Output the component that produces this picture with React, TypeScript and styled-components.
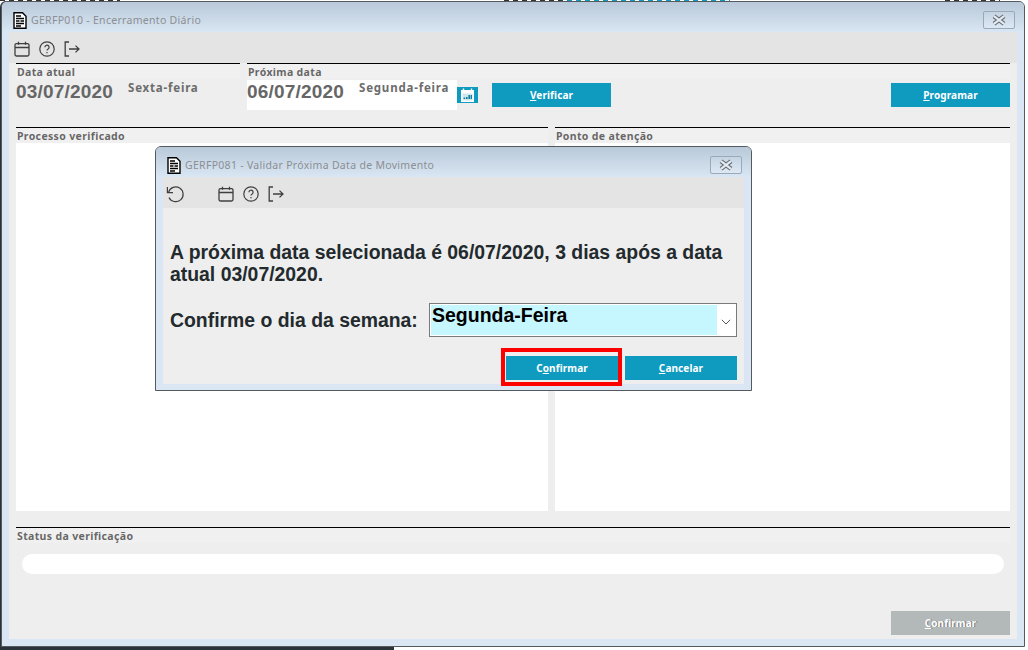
import React from "react";
import styled, { createGlobalStyle } from "styled-components";

const GlobalStyle = createGlobalStyle`
  html, body {
    margin: 0;
    padding: 0;
    background: #fff;
    overflow: hidden;
  }
  body {
    font-family: "Liberation Sans", Arial, sans-serif;
  }
`;

const Page = styled.div`
  position: relative;
  width: 1028px;
  height: 650px;
  display: flex;
  flex-direction: column;
  background: #fff;
`;

const TopStrip = styled.div`
  height: 1px;
  background:
    repeating-linear-gradient(90deg, transparent 0 5px, #fff 5px 9px),
    linear-gradient(
      90deg,
      #333 0 120px,
      #fff 120px 500px,
      #333 500px 560px,
      #0f9bbf 570px 730px,
      #fff 730px 945px,
      #333 945px 1000px,
      #fff 1000px
    );
`;

const BottomStrip = styled.div`
  width: 394px;
  height: 3px;
  background: #2a3338;
`;

const Frame = styled.div<{ $w: number; $h: number }>`
  box-sizing: border-box;
  width: ${({ $w }) => $w}px;
  height: ${({ $h }) => $h}px;
  display: flex;
  flex-direction: column;
  border: 1px solid #555a5e;
  border-radius: 6px 6px 0 0;
  background: #dae6f3;
`;

const MainFrame = styled(Frame)`
  margin-left: 1px;
  box-shadow: -1px 0 0 #2a3338;
`;

const TitleBar = styled.div`
  flex: none;
  box-sizing: border-box;
  height: 30px;
  display: flex;
  align-items: center;
  gap: 4px;
  padding: 6px 9px 0 11px;
  border-radius: 5px 5px 0 0;
  background: linear-gradient(180deg, #b9c9d9 0%, #d9e6f3 100%);
`;

const TitleText = styled.span`
  flex: 1;
  font-family: "Noto Sans", sans-serif;
  font-size: 10.5px;
  letter-spacing: 0.3px;
  color: #8b8f93;
`;

const CloseButton = styled.div`
  box-sizing: border-box;
  width: 32px;
  height: 18px;
  display: flex;
  align-items: center;
  justify-content: center;
  border: 1px solid #9aa9ba;
  border-radius: 2px;
  background: linear-gradient(180deg, #c6d4e2 0%, #dde8f4 100%);
`;

const Inner = styled.div<{ $bottom: number }>`
  flex: 1;
  margin: 0 7px ${({ $bottom }) => $bottom}px;
  display: flex;
  flex-direction: column;
  min-height: 0;
  background: #eeeeee;
`;

const Toolbar = styled.div`
  flex: none;
  box-sizing: border-box;
  height: 31px;
  display: flex;
  align-items: center;
  gap: 9px;
  padding: 3px 0 0 5px;
  background: #e4e4e4;
`;

const DialogToolbar = styled(Toolbar)`
  padding-left: 3px;
`;

const ToolSpacer = styled.div`
  width: 16px;
`;

const Content = styled.div`
  flex: 1;
  display: flex;
  flex-direction: column;
  padding: 0 7px 4px;
`;

const TopRow = styled.div`
  height: 64px;
  display: flex;
  gap: 7px;
`;

const PanelRow = styled.div`
  height: 384px;
  display: flex;
  gap: 7px;
`;

const Group = styled.div<{ $w?: number }>`
  display: flex;
  flex-direction: column;
  flex: ${({ $w }) => ($w ? `0 0 ${$w}px` : "1")};
  min-width: 0;
`;

const GroupLabel = styled.div`
  flex: none;
  box-sizing: border-box;
  height: 16px;
  padding: 1px 0 0 1px;
  border-top: 1px solid #000;
  background: #f0f0f0;
  font-family: "Noto Sans", sans-serif;
  font-weight: 700;
  font-size: 10.5px;
  line-height: 15px;
  letter-spacing: 0.35px;
  color: #666;
  text-shadow: 0 0 1px #fff;
`;

const DateRow = styled.div`
  display: flex;
  align-items: flex-start;
  margin-top: 1px;
`;

const DateBlock = styled.div<{ $white?: boolean }>`
  box-sizing: border-box;
  height: 30px;
  width: ${({ $white }) => ($white ? "210px" : "auto")};
  display: flex;
  align-items: flex-start;
  background: ${({ $white }) => ($white ? "#fff" : "transparent")};
`;

const DateValue = styled.span`
  width: 112px;
  flex: none;
  padding-top: 1px;
  font-weight: 700;
  font-size: 19px;
  line-height: 22px;
  letter-spacing: 0.2px;
  color: #666;
`;

const Weekday = styled.span`
  font-family: "Noto Sans", sans-serif;
  font-weight: 700;
  font-size: 11.5px;
  line-height: 16px;
  letter-spacing: 0.8px;
  color: #6c6c6c;
`;

const CalendarButton = styled.div`
  flex: none;
  width: 21px;
  height: 16px;
  margin-top: 7px;
  display: flex;
  align-items: center;
  justify-content: center;
  background: #0f9bbf;
`;

const ActionButton = styled.div<{ $gray?: boolean; $w?: number }>`
  flex: none;
  box-sizing: border-box;
  width: ${({ $w }) => $w ?? 119}px;
  height: 24px;
  display: flex;
  align-items: center;
  justify-content: center;
  background: ${({ $gray }) => ($gray ? "#b3b8b8" : "#0f9bbf")};
  color: #fff;
  font-family: "Noto Sans", sans-serif;
  font-weight: 700;
  font-size: 10px;
  letter-spacing: 0.1px;
  text-shadow: ${({ $gray }) => ($gray ? "1px 0 0 #777" : "none")};
`;

const TopAction = styled(ActionButton)<{ $push?: boolean }>`
  margin-top: 3px;
  margin-left: ${({ $push }) => ($push ? "auto" : "14px")};
`;

const WhitePanel = styled.div`
  flex: 1;
  background: #fff;
`;

const StatusGroup = styled(Group)`
  margin-top: 16px;
  flex: 1;
`;

const ProgressTrack = styled.div`
  flex: none;
  height: 20px;
  margin: 11px 6px 0;
  border-radius: 10px;
  background: #fff;
`;

const StatusFooter = styled.div`
  margin-top: auto;
  display: flex;
  justify-content: flex-end;
`;

const DialogBox = styled(Frame)`
  position: absolute;
  left: 155px;
  top: 146px;
`;

const DialogContent = styled.div`
  flex: 1;
  display: flex;
  flex-direction: column;
  padding: 33px 7px 0;
`;

const Message = styled.p`
  margin: 0;
  font-weight: 700;
  font-size: 19.4px;
  line-height: 22px;
  color: #222a2d;
`;

const ConfirmRow = styled.div`
  display: flex;
  align-items: center;
  justify-content: space-between;
  margin-top: 18px;
`;

const SelectBox = styled.div`
  box-sizing: border-box;
  width: 308px;
  height: 34px;
  padding: 1px;
  display: flex;
  border: 1px solid #7a7a7a;
  background: #fff;
`;

const SelectValue = styled.div`
  flex: 1;
  padding-left: 1px;
  background: #c6f7ff;
  font-weight: 700;
  font-size: 19.5px;
  line-height: 20px;
  color: #000;
`;

const SelectArrow = styled.div`
  width: 18px;
  display: flex;
  align-items: center;
  justify-content: center;
  padding-top: 3px;
`;

const DialogActions = styled.div`
  display: flex;
  justify-content: flex-end;
  gap: 7px;
  margin-top: 19px;
`;

const Highlighted = styled.div`
  position: relative;

  &::after {
    content: "";
    position: absolute;
    inset: -8px -4px -6px -5px;
    border: 4px solid #ff0000;
  }
`;

const DocIcon = () => (
  <svg width="14" height="17" viewBox="0 0 14 17">
    <path d="M1 .7h8.5l3.5 3.5v12H1z" fill="#fff" stroke="#000" strokeWidth="1.4" />
    <path d="M3 4h5M3 6.5h8M3 9h3.5M7.5 9H11M3 11.5h8M3 14h5" stroke="#000" strokeWidth="1.6" />
  </svg>
);

const CalendarIcon = () => (
  <svg width="16" height="16" viewBox="0 0 16 16" fill="none" stroke="#3f3f3f" strokeWidth="1.3">
    <rect x="1" y="2.6" width="14" height="12.4" rx="1.5" />
    <path d="M1 6.5h14M4.5.8v3M11.5.8v3" />
  </svg>
);

const HelpIcon = () => (
  <svg width="16" height="16" viewBox="0 0 16 16" fill="none" stroke="#3f3f3f" strokeWidth="1.2">
    <circle cx="8" cy="8" r="7.2" />
    <path d="M5.9 6.2a2.1 2.1 0 1 1 3.2 1.8c-.7.4-1.1.8-1.1 1.6" />
    <path d="M8 11v1.2" />
  </svg>
);

const ExitIcon = () => (
  <svg width="16" height="16" viewBox="0 0 16 16" fill="none" stroke="#3f3f3f" strokeWidth="1.3">
    <path d="M5 1H1.2v14H5M5 8h10M11.5 4.6 15 8l-3.5 3.4" />
  </svg>
);

const UndoIcon = () => (
  <svg width="18" height="18" viewBox="0 0 18 18" fill="none" stroke="#3f3f3f" strokeWidth="1.2">
    <path d="M2.6 7.2A7.4 7.4 0 1 1 3 12.4" />
    <path d="M1.4 2v5.6H7" />
  </svg>
);

const CloseGlyph = () => (
  <svg width="16" height="12" viewBox="0 0 16 12">
    <path d="M3 2.2 13 9.8M13 2.2 3 9.8" stroke="#666c74" strokeWidth="4.4" />
    <path d="M3 2.2 13 9.8M13 2.2 3 9.8" stroke="#e4ebf2" strokeWidth="2.2" />
  </svg>
);

const CalendarGlyph = () => (
  <svg width="15" height="15" viewBox="0 0 15 15">
    <rect x="1" y="2" width="13" height="12" fill="#fff" />
    <rect x="2.5" y="5.5" width="10" height="7" fill="#cfe6ee" />
    <path d="M3.5 .5v3M11.5 .5v3" stroke="#fff" strokeWidth="1.4" />
    <path d="M6 9h1.6v2H6zM8.4 7h1.6v4H8.4zM10.6 7h1.4v4h-1.4zM3.6 9.6h1.6V11H3.6z" fill="#0f7f9f" />
  </svg>
);

const ChevronIcon = () => (
  <svg width="10" height="6" viewBox="0 0 10 6" fill="none" stroke="#555" strokeWidth="1">
    <path d="M.8.8 5 5 9.2.8" />
  </svg>
);

const App: React.FC = () => (
  <Page>
    <GlobalStyle />
    <TopStrip />
    <MainFrame $w={1024} $h={646}>
      <TitleBar>
        <DocIcon />
        <TitleText>GERFP010 - Encerramento Diário</TitleText>
        <CloseButton>
          <CloseGlyph />
        </CloseButton>
      </TitleBar>
      <Inner $bottom={7}>
        <Toolbar>
          <CalendarIcon />
          <HelpIcon />
          <ExitIcon />
        </Toolbar>
        <Content>
          <TopRow>
            <Group $w={224}>
              <GroupLabel>Data atual</GroupLabel>
              <DateRow>
                <DateBlock>
                  <DateValue>03/07/2020</DateValue>
                  <Weekday>Sexta-feira</Weekday>
                </DateBlock>
              </DateRow>
            </Group>
            <Group>
              <GroupLabel>Próxima data</GroupLabel>
              <DateRow>
                <DateBlock $white>
                  <DateValue>06/07/2020</DateValue>
                  <Weekday>Segunda-feira</Weekday>
                </DateBlock>
                <CalendarButton>
                  <CalendarGlyph />
                </CalendarButton>
                <TopAction>
                  <span>
                    <u>V</u>erificar
                  </span>
                </TopAction>
                <TopAction $push>
                  <span>
                    <u>P</u>rogramar
                  </span>
                </TopAction>
              </DateRow>
            </Group>
          </TopRow>
          <PanelRow>
            <Group $w={532}>
              <GroupLabel>Processo verificado</GroupLabel>
              <WhitePanel />
            </Group>
            <Group>
              <GroupLabel>Ponto de atenção</GroupLabel>
              <WhitePanel />
            </Group>
          </PanelRow>
          <StatusGroup>
            <GroupLabel>Status da verificação</GroupLabel>
            <ProgressTrack />
            <StatusFooter>
              <ActionButton $gray>
                <span>
                  <u>C</u>onfirmar
                </span>
              </ActionButton>
            </StatusFooter>
          </StatusGroup>
        </Content>
      </Inner>
    </MainFrame>
    <BottomStrip />

    <DialogBox $w={597} $h={245}>
      <TitleBar>
        <DocIcon />
        <TitleText>GERFP081 - Validar Próxima Data de Movimento</TitleText>
        <CloseButton>
          <CloseGlyph />
        </CloseButton>
      </TitleBar>
      <Inner $bottom={6}>
        <DialogToolbar>
          <UndoIcon />
          <ToolSpacer />
          <CalendarIcon />
          <HelpIcon />
          <ExitIcon />
        </DialogToolbar>
        <DialogContent>
          <Message>
            A próxima data selecionada é 06/07/2020, 3 dias após a data
            <br />
            atual 03/07/2020.
          </Message>
          <ConfirmRow>
            <Message>Confirme o dia da semana:</Message>
            <SelectBox>
              <SelectValue>Segunda-Feira</SelectValue>
              <SelectArrow>
                <ChevronIcon />
              </SelectArrow>
            </SelectBox>
          </ConfirmRow>
          <DialogActions>
            <Highlighted>
              <ActionButton $w={112}>
                <span>
                  C<u>o</u>nfirmar
                </span>
              </ActionButton>
            </Highlighted>
            <ActionButton $w={112}>
              <span>
                <u>C</u>ancelar
              </span>
            </ActionButton>
          </DialogActions>
        </DialogContent>
      </Inner>
    </DialogBox>
  </Page>
);

export default App;
